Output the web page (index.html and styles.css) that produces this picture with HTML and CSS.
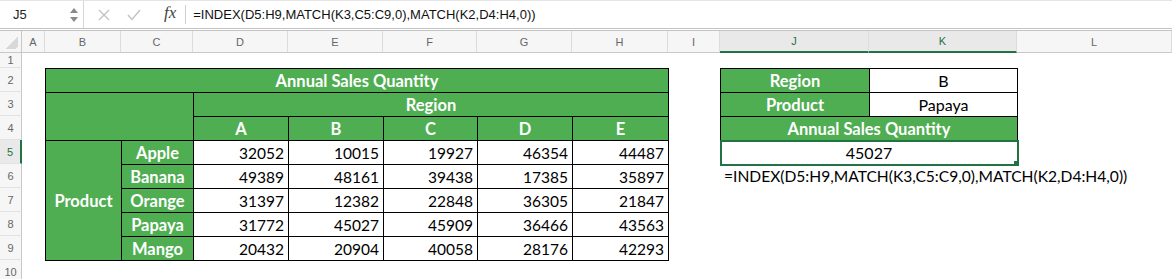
FILE: index.html
```html
<!DOCTYPE html>
<html lang="en">
<head>
    <meta charset="UTF-8">
    <title>Sales Lookup - INDEX MATCH</title>
    <link rel="stylesheet" href="styles.css">
</head>
<body>
    <div class="formula-bar">
        <div class="name-box">
            <span class="cell-ref">J5</span>
            <svg class="spinner" width="8" height="16" viewBox="0 0 8 16">
                <path d="M4 1 L8 6 L0 6 Z" fill="#8a8a8a"/>
                <path d="M0 10 L8 10 L4 15 Z" fill="#8a8a8a"/>
            </svg>
        </div>
        <div class="fx-tools">
            <svg class="tool-icon" width="12" height="12" viewBox="0 0 12 12">
                <path d="M1 1 L11 11 M11 1 L1 11" stroke="#c2c2c2" stroke-width="1.4" fill="none"/>
            </svg>
            <svg class="tool-icon" width="14" height="12" viewBox="0 0 14 12">
                <path d="M1 6 L5 10.5 L13 1" stroke="#c2c2c2" stroke-width="1.4" fill="none"/>
            </svg>
            <span class="fx">fx</span>
        </div>
        <div class="formula-input">=INDEX(D5:H9,MATCH(K3,C5:C9,0),MATCH(K2,D4:H4,0))</div>
    </div>

    <div class="sheet">
        <div class="corner"></div>
        <div class="col-head">A</div>
        <div class="col-head">B</div>
        <div class="col-head">C</div>
        <div class="col-head">D</div>
        <div class="col-head">E</div>
        <div class="col-head">F</div>
        <div class="col-head">G</div>
        <div class="col-head">H</div>
        <div class="col-head">I</div>
        <div class="col-head active">J</div>
        <div class="col-head active">K</div>
        <div class="col-head">L</div>

        <div class="row-head">1</div>
        <div class="row-head">2</div>
        <div class="row-head">3</div>
        <div class="row-head">4</div>
        <div class="row-head active">5</div>
        <div class="row-head">6</div>
        <div class="row-head">7</div>
        <div class="row-head">8</div>
        <div class="row-head">9</div>
        <div class="row-head">10</div>

        <table class="sales-table">
            <colgroup>
                <col class="w-b"><col class="w-c"><col class="w-d"><col class="w-e"><col class="w-f"><col class="w-g"><col class="w-h">
            </colgroup>
            <tr>
                <td class="head" colspan="7">Annual Sales Quantity</td>
            </tr>
            <tr>
                <td class="head" colspan="2" rowspan="2"></td>
                <td class="head" colspan="5">Region</td>
            </tr>
            <tr>
                <td class="head">A</td>
                <td class="head">B</td>
                <td class="head">C</td>
                <td class="head">D</td>
                <td class="head">E</td>
            </tr>
            <tr>
                <td class="head" rowspan="5">Product</td>
                <td class="head">Apple</td>
                <td class="num">32052</td><td class="num">10015</td><td class="num">19927</td><td class="num">46354</td><td class="num">44487</td>
            </tr>
            <tr>
                <td class="head">Banana</td>
                <td class="num">49389</td><td class="num">48161</td><td class="num">39438</td><td class="num">17385</td><td class="num">35897</td>
            </tr>
            <tr>
                <td class="head">Orange</td>
                <td class="num">31397</td><td class="num">12382</td><td class="num">22848</td><td class="num">36305</td><td class="num">21847</td>
            </tr>
            <tr>
                <td class="head">Papaya</td>
                <td class="num">31772</td><td class="num">45027</td><td class="num">45909</td><td class="num">36466</td><td class="num">43563</td>
            </tr>
            <tr>
                <td class="head">Mango</td>
                <td class="num">20432</td><td class="num">20904</td><td class="num">40058</td><td class="num">28176</td><td class="num">42293</td>
            </tr>
        </table>

        <table class="lookup-table">
            <colgroup>
                <col class="w-j"><col class="w-k">
            </colgroup>
            <tr>
                <td class="head">Region</td>
                <td class="value">B</td>
            </tr>
            <tr>
                <td class="head">Product</td>
                <td class="value">Papaya</td>
            </tr>
            <tr>
                <td class="head" colspan="2">Annual Sales Quantity</td>
            </tr>
            <tr>
                <td class="value selected" colspan="2">45027</td>
            </tr>
        </table>

        <div class="formula-note">=INDEX(D5:H9,MATCH(K3,C5:C9,0),MATCH(K2,D4:H4,0))</div>
    </div>
</body>
</html>
```

FILE: styles.css
```css
body {
    margin: 0;
    background: #fff;
    font-family: Lato, 'Liberation Sans', sans-serif;
    color: #000;
    overflow: hidden;
}

/* formula bar */
.formula-bar {
    display: flex;
    align-items: center;
    height: 27px;
    border-top: 1px solid #e4e4e4;
    border-bottom: 3px double #c4c4c4;
}
.name-box {
    display: flex;
    align-items: center;
    justify-content: space-between;
    width: 84px;
    height: 100%;
    box-sizing: border-box;
    padding: 0 5px 0 13px;
    border-right: 1px solid #d6d6d6;
    font-family: 'Liberation Sans', sans-serif;
    font-size: 13px;
    color: #222;
}
.fx-tools {
    display: flex;
    align-items: center;
    height: 100%;
    padding-left: 14px;
}
.tool-icon {
    margin-right: 17px;
}
.fx {
    font-family: 'Liberation Serif', serif;
    font-style: italic;
    font-size: 17px;
    color: #444;
    padding: 0 9px 3px 6px;
    border-right: 1px solid #cfcfcf;
    line-height: 16px;
}
.formula-input {
    padding-left: 7px;
    font-family: 'Liberation Sans', sans-serif;
    font-size: 13px;
    color: #111;
}

/* sheet grid */
.sheet {
    display: grid;
    grid-template-columns: 22px 23px 76px 72px 95px 95px 94px 95px 96px 52px 149px 148px 1fr;
    grid-template-rows: 22px 15px repeat(8, 24px) 24px;
}
.corner,
.col-head {
    background: #f6f6f6;
    border-bottom: 1px solid #c8c8c8;
    border-right: 1px solid #dcdcdc;
}
.corner {
    background: linear-gradient(135deg, #f6f6f6 55%, #d8d8d8 55%, #d8d8d8 90%, #f6f6f6 90%);
    background-size: 14px 14px;
    background-repeat: no-repeat;
    background-position: right 3px bottom 3px;
    background-color: #f6f6f6;
    border-right-color: #c8c8c8;
}
.col-head {
    display: flex;
    align-items: center;
    justify-content: center;
    font-family: 'Liberation Sans', sans-serif;
    font-size: 11px;
    color: #666;
}
.col-head.active {
    background: #e9e9e9;
    color: #217346;
    border-bottom: 2px solid #217346;
}
.row-head {
    grid-column: 1;
    display: flex;
    align-items: center;
    justify-content: center;
    background: #f6f6f6;
    border-right: 1px solid #c8c8c8;
    border-bottom: 1px solid #e2e2e2;
    font-family: 'Liberation Sans', sans-serif;
    font-size: 11px;
    color: #666;
}
.row-head.active {
    background: #e9e9e9;
    color: #217346;
    border-right: 2px solid #217346;
}

/* data tables */
.sales-table,
.lookup-table {
    border-collapse: collapse;
    table-layout: fixed;
    width: 100%;
    font-size: 15.5px;
}
.sales-table {
    grid-column: 3 / 10;
    grid-row: 3 / 11;
}
.lookup-table {
    grid-column: 11 / 13;
    grid-row: 3 / 7;
    align-self: start;
}
.w-b { width: 76px; }
.w-c { width: 72px; }
.w-d { width: 95px; }
.w-e { width: 95px; }
.w-f { width: 94px; }
.w-g { width: 95px; }
.w-h { width: 96px; }
.w-j { width: 149px; }
.w-k { width: 148px; }

.sales-table td,
.lookup-table td {
    height: 23px;
    padding: 0 4px;
    border: 1px solid #000;
    white-space: nowrap;
    overflow: hidden;
}
td.head {
    background: #4fad52;
    color: #fff;
    font-weight: 700;
    font-size: 16.5px;
    text-align: center;
}
td.num {
    text-align: right;
}
td.value {
    text-align: center;
    font-size: 16px;
}
td.selected {
    position: relative;
    outline: 2px solid #217346;
    outline-offset: -1px;
}
td.selected::after {
    content: '';
    position: absolute;
    right: -3px;
    bottom: -3px;
    width: 5px;
    height: 5px;
    background: #217346;
    border: 1px solid #fff;
}

.formula-note {
    grid-column: 11 / 14;
    grid-row: 7;
    display: flex;
    align-items: center;
    padding-left: 4px;
    font-size: 15.6px;
    white-space: nowrap;
}
```
